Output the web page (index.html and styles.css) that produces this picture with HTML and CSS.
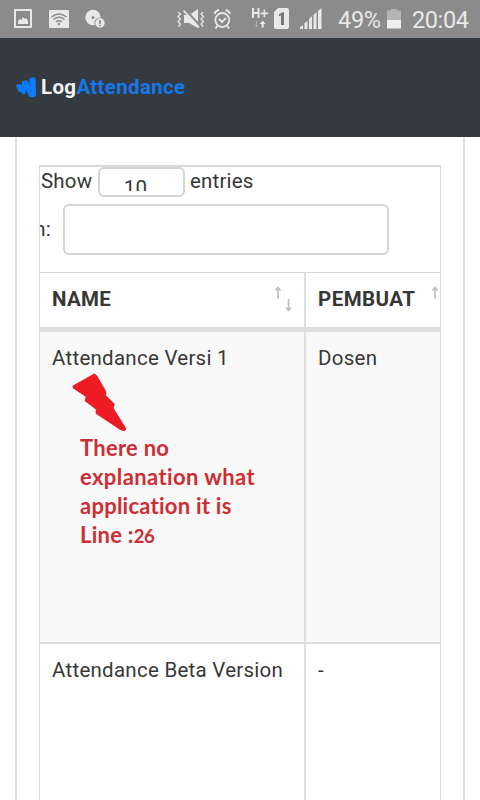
FILE: index.html
```
<!DOCTYPE html>
<html lang="en">
<head>
<meta charset="utf-8">
<title>LogAttendance</title>
<link rel="stylesheet" href="styles.css">
</head>
<body>
<div class="screen">
  <div class="status">
    <svg class="status-icons" width="330" height="38" viewBox="0 0 330 38" fill="#e8e8e8">
      <path fill-rule="evenodd" d="M15 9h16q1 0 1 1v17q0 1-1 1H15q-1 0-1-1V10q0-1 1-1zM16 11v15h14V11z"/>
      <path d="M18 24v-3l2-2 1.500 1 1.500-3 2 2 1.500-1 1.500 3v3z"/>
      <rect x="49" y="10" width="20" height="18" rx="1"/>
      <g fill="none" stroke="#8b8b8b" stroke-width="1.500"><path d="M51.500 17q7.500-6 15 0M53.500 19.500q5.500-4.500 11 0M56 22q3-2.500 6 0"/></g>
      <circle cx="59" cy="24" r="1.200" fill="#8b8b8b"/>
      <circle cx="93" cy="17.500" r="7.700"/><circle cx="93" cy="17.500" r="1.500" fill="#8b8b8b"/>
      <circle cx="100" cy="23" r="5.600" fill="#8b8b8b"/><circle cx="100" cy="23" r="4.700"/>
      <path d="M99.300 20h1.400v4h-1.400zm0 4.800h1.400v1.400h-1.400z" fill="#777"/>
      <path d="M184 15h5l9-6v19l-9-5h-5z"/>
      <path d="M185 9l16 18" stroke="#8b8b8b" stroke-width="2"/><path d="M183.500 10.500l15.500 17" stroke="#e8e8e8" stroke-width="1.800"/>
      <g fill="none" stroke="#e8e8e8" stroke-width="1.300"><path d="M178 12l2.500 2-2.500 2.500 2.500 2.500-2.500 2.500 2.500 2.500-2 2.500M203 12l-2 2 2.500 2.500-2.500 2.500 2.500 2.500-2.500 2.500 2 2.500"/></g>
      <g fill="none" stroke="#e8e8e8" stroke-width="1.800"><circle cx="222.300" cy="20" r="7"/><path d="M214.500 14q1-3.500 4.500-4M230 14q-1-3.500-4.500-4M219 19l3 3 4-4M217.500 25.500l-2 3M227 25.500l2 3"/></g>
      <path d="M252 8h2v4h3.500V8h2v10h-2v-4H254v4h-2zM263.500 9.500h1.700v3h3v1.700h-3v3h-1.700v-3h-3v-1.700h3z"/>
      <path d="M256 21h1v4h1.500l-2 2.500-2-2.500h1.500z" opacity=".4"/><path d="M262.700 20.500l3 3.500h-2v3.500h-2V24h-2z"/>
      <path d="M278 8h9q2 0 2 2v17q0 2-2 2h-11q-2 0-2-2V12z"/>
      <path d="M281 15.500l-2 .8v-2l3.500-2h1.500V25h-3z" fill="#777"/>
      <path d="M300 29v-2l3-2v4zM304.500 29v-6l3-2v8zM309 29V19l3-3v13zM313.500 29V15l3-3v17zM318 29V11l3.500-3v21z"/>
    </svg>
    <span class="percent">49%</span>
    <span class="battery"></span>
    <span class="clock">20:04</span>
  </div>
  <div class="navbar">
    <svg class="logo" width="22" height="22" viewBox="0 0 22 22" fill="#0a7cff"><path d="M0 8l4-1 2 1.500V4.500l5-1.500 2.500 4V1l4.500-.8q1.500.5 1.700 2l.3 16.300-2 1.700-4.500-.2L10 12.500l-.8 4.500-2.700.3L5 15l-2.500-.5z"/><path d="M6 8l2.500 6M13 7l2.500 8" stroke="#1c5eb8" stroke-width=".7"/></svg>
    <span class="brand">Log<span class="brand-blue">Attendance</span></span>
  </div>
  <div class="card">
    <div class="table-box">
      <div class="length">Show <span class="select"><span>10</span></span> entries</div>
      <div class="filter"><span class="filter-label">Search:</span><span class="search"></span></div>
      <div class="row head">
        <div class="cell"><span>NAME</span><svg class="sort" width="20" height="28" viewBox="0 0 20 28"><path d="M5 14V3M2.500 5.500L5 2.500l2.500 3M15.500 14v11M13 22.500l2.500 3 2.500-3"/></svg></div>
        <div class="cell"><span class="wide">PEMBUAT</span><svg class="sort" width="20" height="28" viewBox="0 0 20 28"><path d="M5 14V3M2.500 5.500L5 2.500l2.500 3M15.500 14v11M13 22.500l2.500 3 2.500-3"/></svg></div>
      </div>
      <div class="row odd">
        <div class="cell">Attendance Versi 1</div>
        <div class="cell">Dosen</div>
      </div>
      <div class="row last">
        <div class="cell">Attendance Beta Version</div>
        <div class="cell">-</div>
      </div>
    </div>
  </div>
  <svg class="arrow" width="56" height="60" viewBox="0 0 56 60"><path d="M1 13L22.300 1l2.200 1.500L34 19l-.7 3.300L42.300 31 41 35l13 21-1.700 1.700-4.300-1.400-24-16 .3-4L13 27.700l1.300-4L1.300 15z" fill="#ed1c24" stroke="#ed1c24" stroke-linejoin="round"/></svg>
  <div class="note">There no<br><span class="stretch">explanation what</span><br>application it is<br>Line :<span class="number">26</span></div>
</div>
</body>
</html>
```
FILE: styles.css
```
* { box-sizing: border-box; }
body { margin: 0; background: #fff; font-family: Roboto, sans-serif; color: #373737; }
.screen { position: relative; width: 480px; height: 800px; overflow: hidden; display: flex; flex-direction: column; }
.status { height: 38px; flex: none; background: #8b8b8b; display: flex; align-items: center; color: #e8e8e8; font-size: 23.500px; white-space: nowrap; }
.status-icons { flex: none; }
.percent { width: 49px; margin-left: 8px; padding-top: 2px; letter-spacing: -.3px; }
.battery { width: 14px; height: 20px; margin-top: -1px; background: linear-gradient(#b4b4b4 0 11px, #eee 11px); clip-path: polygon(0 2px, 4px 2px, 4px 0, 10px 0, 10px 2px, 14px 2px, 14px 100%, 0 100%); }
.clock { margin-left: 11px; padding-top: 2px; letter-spacing: -.4px; }
.navbar { height: 99px; flex: none; background: #343a40; display: flex; align-items: center; padding-left: 16px; }
.logo { flex: none; margin-right: 3px; }
.brand { font-size: 20.500px; font-weight: 700; letter-spacing: .33px; color: #f3f3f3; margin-top: -2px; }
.brand-blue { color: #1478e8; }
.card { flex: 1; margin: 0 15px; border: solid #e0e0e0; border-width: 0 2px; padding: 28px 22px 0; }
.table-box { width: 402px; height: 640px; overflow: hidden; border: 1px solid #d9d9d9; border-top-width: 2px; font-size: 20.500px; letter-spacing: .26px; }
.length { height: 32px; display: flex; white-space: pre; padding-left: 1px; line-height: 28px; letter-spacing: .2px; }
.select { width: 87px; height: 30px; border: 2px solid #d4d4d4; border-radius: 6px; overflow: hidden; padding-left: 24px; line-height: 39px; }
.select span { display: block; height: 22px; overflow: hidden; }
.filter { height: 73px; display: flex; padding-top: 5px; }
.filter-label { width: 23px; display: flex; justify-content: flex-end; line-height: 50px; padding-right: 12px; overflow: hidden; }
.search { width: 326px; height: 51px; border: 2px solid #d4d4d4; border-radius: 6px; }
.row { display: grid; grid-template-columns: 266px 157px; width: 423px; }
.cell { padding: 14px 12px; line-height: 24px; border-right: 2px solid #dedede; white-space: nowrap; }
.head { height: 60px; border-top: 1px solid #d9d9d9; border-bottom: 5px solid #dedede; font-weight: 700; }
.head .cell { display: flex; justify-content: space-between; padding: 14px 11px 0 12px; }
.wide { letter-spacing: .45px; }
.sort { flex: none; margin-top: -2px; fill: none; stroke: #bebebe; stroke-width: 1.6; }
.odd { height: 312px; background: #f9f9f9; border-bottom: 2px solid #dedede; }
.last { height: 180px; }
.arrow { position: absolute; left: 72px; top: 373px; }
.note { position: absolute; left: 80px; top: 433px; font: 700 22px/29px Lato, sans-serif; font-variant-ligatures: none; letter-spacing: .25px; color: #cc2e34; white-space: nowrap; }
.stretch { letter-spacing: .4px; }
.number { font-size: 18.500px; letter-spacing: -.3px; }
```
